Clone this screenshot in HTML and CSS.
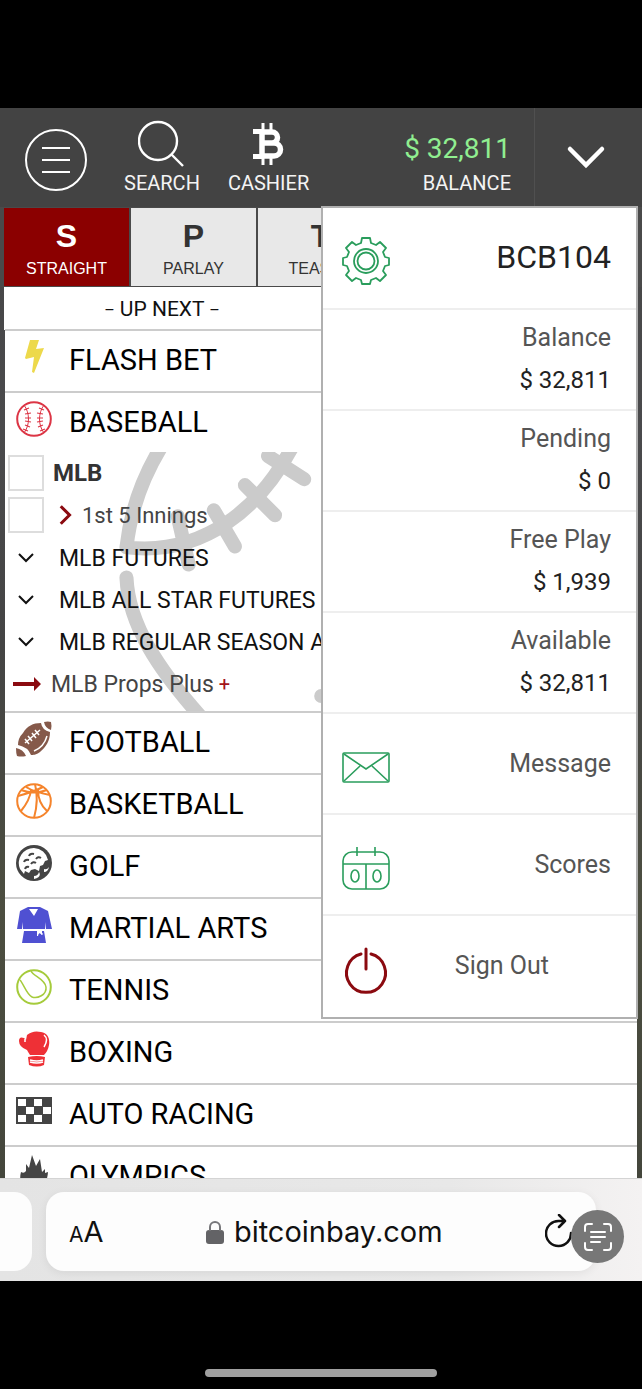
FILE: index.html
```html
<!DOCTYPE html>
<html lang="en">
<head>
<meta charset="utf-8">
<meta name="viewport" content="width=device-width, initial-scale=1">
<title>Sportsbook</title>
<link rel="stylesheet" href="styles.css">
</head>
<body>
<div class="site">
  <header class="topbar">
    <button class="top-btn burger" aria-label="Menu">
      <svg width="64" height="64" viewBox="0 0 64 64" fill="none" stroke="#fff" stroke-width="2"><circle cx="32" cy="32" r="30"/><path d="M18 20h28M18 32h28M18 44h28"/></svg>
    </button>
    <button class="top-btn tool">
      <svg width="48" height="48" viewBox="0 0 48 48" fill="none" stroke="#fff" stroke-width="2.4"><circle cx="20" cy="21" r="19"/><path d="M33 34l12 12"/></svg>
      <span>SEARCH</span>
    </button>
    <button class="top-btn tool">
      <svg width="48" height="48" viewBox="0 0 48 48" fill="none" stroke="#fff"><path stroke-width="3" d="M18 3v8M26 3v8M18 37v8M26 37v8"/><path stroke-width="5.500" d="M17 12h10a5.500 5.500 0 0 1 0 11H17zM17 23h12a6.500 6.500 0 0 1 0 13H17z"/><path stroke-width="5" d="M8 11.500h9M8 36.500h9"/></svg>
      <span>CASHIER</span>
    </button>
    <div class="balance"><strong>$ 32,811</strong><span>BALANCE</span></div>
    <button class="top-btn toggle" aria-label="Account menu" aria-expanded="true">
      <svg width="40" height="26" viewBox="0 0 40 26" fill="none" stroke="#fff" stroke-width="4.500" stroke-linecap="round"><path d="M4 4l16 16L36 4"/></svg>
    </button>
  </header>

  <nav class="tabs">
    <button class="tab active"><b>S</b><span>STRAIGHT</span></button>
    <button class="tab"><b>P</b><span>PARLAY</span></button>
    <button class="tab"><b>T</b><span>TEASER</span></button>
  </nav>
  <h2 class="upnext"><i>–</i> UP NEXT <i>–</i></h2>

  <main class="sports">
    <a class="sport" href="#flash">
      <svg class="icon" viewBox="0 0 36 36"><path fill="#edd94b" d="M14 1h9l-3 9 8-1-10 25-2-1 2-15-8 2-1-1z"/></svg>FLASH BET</a>
    <section>
      <a class="sport" href="#baseball">
        <svg class="icon" viewBox="0 0 36 36" fill="none" stroke="#dc3545"><circle cx="18" cy="18" r="16.800" stroke-width="2"/><path stroke-width="1" d="M8 4c6 8 6 20 0 28M28 4c-6 8-6 20 0 28"/><path stroke-width="1.200" d="M8 9l5-2M9 13l6-1M9 17h6M9 20l6 1M9 24l5 2M7 28l5 2M28 9l-5-2M27 13l-6-1M27 17h-6M27 20l-6 1M27 24l-5 2M29 28l-5 2"/></svg>BASEBALL</a>
      <div class="leagues">
        <svg class="watermark" viewBox="5 453 632 258" preserveAspectRatio="xMinYMin slice" fill="none" stroke="#cbcbcb" stroke-width="14" stroke-linecap="round" stroke-linejoin="round"><path d="M163 444Q132 493 126 548C205 557 260 506 290 450M126 578C128 625 158 670 202 719M267 457l36 23M244 486l30 30M213 511l21 36M177 517l11 48M320 696h3"/></svg>
        <label class="league"><input type="checkbox"><b>MLB</b></label>
        <label class="league"><input type="checkbox"><svg class="caret" viewBox="0 0 16 24" fill="none" stroke="#8b0a10" stroke-width="3.500"><path d="M2 2l10 10L2 22"/></svg><span class="period">1st 5 Innings</span></label>
        <div class="futures">
          <button class="future"><svg viewBox="0 0 16 10" fill="none" stroke="#111" stroke-width="2"><path d="M1 1l7 7 7-7"/></svg>MLB FUTURES</button>
          <button class="future"><svg viewBox="0 0 16 10" fill="none" stroke="#111" stroke-width="2"><path d="M1 1l7 7 7-7"/></svg>MLB ALL STAR FUTURES</button>
          <button class="future"><svg viewBox="0 0 16 10" fill="none" stroke="#111" stroke-width="2"><path d="M1 1l7 7 7-7"/></svg>MLB REGULAR SEASON AWARDS</button>
          <a class="props" href="#props"><svg viewBox="0 0 28 14"><path fill="#8b0a10" d="M0 5h21V0l7 7-7 7V9H0z"/></svg>MLB Props Plus <em>+</em></a>
        </div>
      </div>
    </section>
    <a class="sport" href="#football">
      <svg class="icon" viewBox="0 0 36 36"><path fill="#85594a" d="M7 12C11 5 17 2 25 2q1 7 9 9c0 9-4 15-10 20-4 3-7 3-9 3Q12 26 2 24q0-7 5-12zM28 1q4-1 7 0 1 4 0 8-6-2-7-8zM0 27q7 1 10 8-5 1-9 0-1-3-1-8z"/><path fill="none" stroke="#fff" stroke-width="1.500" d="M9 22L24 9M9 18l4 5M12 15l4 5M16 12l4 5M19 9l4 5M31 15q-3 11-13 15"/></svg>FOOTBALL</a>
    <a class="sport" href="#basketball">
      <svg class="icon" viewBox="0 0 36 36" fill="none" stroke="#f5842c" stroke-width="2"><circle cx="18" cy="18" r="16.800"/><path d="M19 1q4 16-1 34M5 7q13 5 26 0M10 4q8 5 24 8M27 4Q17 9 2 13M15 7Q14 17 5 28M22 7q0 13 9 21"/></svg>BASKETBALL</a>
    <a class="sport" href="#golf">
      <svg class="icon" viewBox="0 0 36 36"><circle cx="18" cy="18" r="18" fill="#444"/><path fill="#fff" d="M18 3a15 15 0 0 1 14 12l-3 1-2 4-3 1-1 5-4-2-4 1-2 3-4-2-1 3-4-5A15 15 0 0 1 18 3zM28 24q3 1 5-2-1 5-5 5zM18 31q4 0 5-4 3 5-5 7z"/><path fill="none" stroke="#444" stroke-width="2" d="M13 11q1-3 5-2M20 14q2-3 5-1M8 17q1-3 5-2M15 19q2-3 5-1M9 24q1-3 4-2"/></svg>GOLF</a>
    <a class="sport" href="#martial-arts">
      <svg class="icon" viewBox="0 0 36 36" fill="#4f50d2"><path d="M12 0h12l8 4 4 18h-6l-1-7v7H7v-7l-1 7H1L4 4z"/><path d="M8 24h14l-1 4 3-2 2 2v-4h2l2 12H6z"/><path fill="#fff" d="M13 2h9l-4 7zM21 22l2 0 4 5-1 1-3-3-1 4-1 0z"/></svg>MARTIAL ARTS</a>
    <a class="sport" href="#tennis">
      <svg class="icon" viewBox="0 0 36 36" fill="none" stroke="#a5cb3b" stroke-width="2"><circle cx="18" cy="18" r="16.800"/><path stroke-width="1.500" d="M15 2c2 5 14 8 15 16S21 30 16 28 7 14 4 11"/></svg>TENNIS</a>
    <a class="sport" href="#boxing">
      <svg class="icon" viewBox="0 0 36 36"><path fill="#ee3036" d="M11 4Q17-1 25 1c7 1 9 7 8 13q-1 6-5 10H14q-2-3-3-5-8-3-8-9Q3 5 8 7l2 2zM12 26q9-2 17 0l-1 8q-7 3-15 0z"/><path fill="none" stroke="#fff" stroke-width="1.500" d="M28 4q5 4 0 12M9 8v3M14 29q7 2 13 0M14 31q7 2 13 0"/></svg>BOXING</a>
    <a class="sport" href="#auto-racing">
      <svg class="icon" viewBox="0 0 36 36"><path fill="#444" d="M0 4h36v27H0z"/><path fill="#fff" d="M2 6h8v7H2zM18 6h8v7h-8zM10 14h8v7h-8zM27 14h8v7h-8zM2 22h8v7H2zM18 22h8v7h-8z"/></svg>AUTO RACING</a>
    <a class="sport" href="#olympics">
      <svg class="icon" viewBox="0 0 36 36"><path fill="#444" d="M5 17q3 2 5-1V9l3 4 3-13 4 11 4-7 2 13 3-3v4l3-1q-1 16-14 17Q1 32 5 17z"/></svg>OLYMPICS</a>
  </main>

  <aside class="account">
    <a class="item user" href="#settings">
      <svg viewBox="0 0 48 48" fill="none" stroke="#2a9d5c" stroke-width="1.800"><circle cx="24" cy="24" r="12"/><circle cx="24" cy="24" r="8.500"/><path stroke-linejoin="round" d="M20 1h8l1 5 5 2 4-3 6 6-3 4 2 5 4 1v7l-4 1-2 5 3 4-6 6-4-3-5 2-1 4h-8l-1-4-5-2-4 3-6-6 3-4-2-5-4-1v-7l4-1 2-5-3-4 6-6 4 3 5-2z"/></svg>
      <span>BCB104</span></a>
    <div class="item money"><span>Balance</span><b>$ 32,811</b></div>
    <div class="item money"><span>Pending</span><b>$ 0</b></div>
    <div class="item money"><span>Free Play</span><b>$ 1,939</b></div>
    <div class="item money"><span>Available</span><b>$ 32,811</b></div>
    <a class="item" href="#message">
      <svg viewBox="0 0 48 48" fill="none" stroke="#2a9d5c" stroke-width="1.600"><rect x="1" y="9" width="46" height="29" rx="1"/><path d="M2 10l22 15 22-15M2 37l16-15M46 37L30 22"/></svg>
      <span>Message</span></a>
    <a class="item" href="#scores">
      <svg viewBox="0 0 48 48" fill="none" stroke="#2a9d5c" stroke-width="1.600"><rect x="1" y="7" width="46" height="37" rx="9"/><path d="M15 2v9M33 2v9M1 19h46M24 19v25"/><ellipse cx="13" cy="31" rx="4" ry="6"/><ellipse cx="35" cy="31" rx="4" ry="6"/></svg>
      <span>Scores</span></a>
    <button class="item signout">
      <svg viewBox="0 0 48 48" fill="none" stroke="#8b0a10" stroke-width="3" stroke-linecap="round"><path d="M24 3v20M19 8a19.500 19.500 0 1 0 10 0"/></svg>
      <span>Sign Out</span></button>
  </aside>
</div>

<div class="browser">
  <div class="prev-page"></div>
  <div class="address">
    <button class="reader" aria-label="Page settings"><small>A</small>A</button>
    <button class="url"><svg width="18" height="24" viewBox="0 0 18 24"><rect y="10" width="18" height="14" rx="3" fill="#636366"/><path d="M4 11V7a5 5 0 0 1 10 0v4" fill="none" stroke="#77777a" stroke-width="2"/></svg>bitcoinbay.com</button>
    <button class="reload" aria-label="Reload"><svg width="28" height="36" viewBox="0 0 28 36" fill="none" stroke="#111" stroke-width="2.500" stroke-linecap="round" stroke-linejoin="round"><path d="M26 19A12.500 12.500 0 1 1 14 7h6M14 1l6 6-6 6"/></svg></button>
  </div>
  <button class="livetext" aria-label="Scan text"><svg width="28" height="28" viewBox="0 0 28 28" fill="none" stroke="#fff" stroke-width="2" stroke-linecap="round"><path d="M1 8V4q0-3 3-3h4M20 1h4q3 0 3 3v4M27 20v4q0 3-3 3h-4M8 27H4q-3 0-3-3v-4M7 9h14M7 14h14M7 19h9"/></svg></button>
</div>
<div class="home"></div>
</body>
</html>
```
FILE: styles.css
```css
* { box-sizing: border-box; }
body {
  margin: 0;
  height: 100vh;
  padding-top: 108px;
  display: grid;
  grid-template-rows: 1fr 103px 108px;
  background: #000;
  color: #111;
  font-family: Roboto, "Liberation Sans", sans-serif;
}
button {
  margin: 0;
  padding: 0;
  border: 0;
  background: none;
  color: inherit;
  font: inherit;
  cursor: pointer;
}
a { color: inherit; text-decoration: none; }
svg { display: block; flex: none; }

.site {
  position: relative;
  min-height: 0;
  overflow: hidden;
  background: linear-gradient(#444 0, #4a4a4c 30%, #444 50%, #4c4e40 75%, #44463c 100%);
}

.topbar {
  display: flex;
  height: 99px;
  padding-left: 24px;
  background: #434343;
  color: #f4f4f4;
}
.burger { display: grid; place-items: center; width: 64px; padding-top: 5px; }
.tool {
  display: flex;
  flex-direction: column;
  align-items: center;
  padding-top: 12px;
  margin-left: 28px;
  font-size: 20px;
  line-height: 30px;
}
.burger + .tool { margin-left: 36px; }
.balance {
  display: flex;
  flex-direction: column;
  align-items: flex-end;
  margin-left: auto;
  padding: 22px 23px 0 0;
  font-size: 20px;
  line-height: 30px;
}
.balance strong {
  color: #90ee90;
  font-size: 28px;
  font-weight: 400;
  line-height: 38px;
}
.toggle {
  display: grid;
  place-items: center;
  width: 108px;
  padding-right: 5px;
  border-left: 1px solid #505050;
}

.tabs {
  display: grid;
  grid-template-columns: repeat(5, 1fr);
  gap: 2px;
  padding: 1px 5px 1px 4px;
  background: #4a4a4a;
}
.tab {
  display: flex;
  flex-direction: column;
  align-items: center;
  height: 78px;
  padding-top: 10px;
  background: #e8e8e8;
  color: #333;
  font-family: "Liberation Sans", Arial, sans-serif;
  font-size: 16px;
  line-height: 30px;
}
.tab b { font-size: 32px; line-height: 36px; }
.tab.active { background: #8b0000; color: #fff; }

.upnext {
  margin: 0 4px;
  padding: 3px 318px 0 0;
  background: #fff;
  font-size: 21px;
  font-weight: 400;
  line-height: 39px;
  text-align: center;
}
.upnext i { font-size: 16px; font-style: normal; }

.sports { margin: 0 5px; background: #fff; }
.sport {
  display: flex;
  align-items: flex-start;
  gap: 17px;
  height: 62px;
  padding: 8px 11px;
  border-top: 2px solid #ccc;
  color: #000;
  font-size: 29px;
  line-height: 42px;
}
.upnext + .sports { margin-top: -1px; }
.icon { width: 36px; height: 36px; }

.leagues { position: relative; padding-bottom: 6px; margin-top: -1px; }
.watermark { position: absolute; width: 100%; height: 100%; }
.league, .future, .props {
  position: relative;
  display: flex;
  align-items: center;
  height: 42px;
  font-size: 22px;
  white-space: nowrap;
}
.league { padding-left: 3px; gap: 9px; color: #333; }
.league b { font-size: 24px; }
.league input {
  appearance: none;
  width: 36px;
  height: 36px;
  margin: 0;
  border: 2px solid #ddd;
  background: #fff;
}
.caret { width: 14px; height: 24px; margin-left: 6px; }
.period { color: #444; }
.futures { padding-top: 1px; }
.future { gap: 25px; padding-left: 13px; font-size: 23px; }
.future svg { width: 16px; height: 10px; }
.props { gap: 10px; padding-left: 8px; color: #444; font-size: 23px; }
.props svg { width: 28px; height: 14px; }
.props em { color: #a3141a; font-style: normal; font-size: 20px; margin-left: -5px; }

.account {
  position: absolute;
  top: 98px;
  left: 50%;
  right: 4px;
  border: 2px solid #b0b0b0;
  background: #fff;
  color: #555;
  font-size: 25px;
  line-height: 30px;
}
.item {
  display: flex;
  justify-content: space-between;
  width: 100%;
  height: 101px;
  padding: 35px 25px 0 19px;
  border-top: 2px solid #eee;
}
.item:first-child { height: 100px; border-top: 0; }
.item svg { width: 48px; height: 48px; margin-top: -5px; }
.item.user { padding-top: 34px; color: #222; font-size: 32px; }
.money {
  flex-direction: column;
  align-items: flex-end;
  justify-content: flex-start;
  gap: 12px;
  padding-top: 13px;
}
.money b { color: #222; font-size: 24px; font-weight: 400; }
.signout { height: 103px; padding-right: 87px; }

.browser {
  position: relative;
  display: flex;
  gap: 14px;
  padding: 13px 46px 10px 0;
  overflow: hidden;
  border-top: 1px solid #d4d4d4;
  background: linear-gradient(90deg, #e4e4e4, #e8e8e8 70%, #f4f2f2);
}
.prev-page { width: 32px; border-radius: 0 18px 18px 0; background: #fdfdfd; }
.address {
  flex: 1;
  display: flex;
  align-items: center;
  justify-content: space-between;
  padding: 0 23px;
  border-radius: 18px;
  background: #fdfdfd;
  box-shadow: 0 2px 10px #0001;
  font-family: Inter, "Liberation Sans", sans-serif;
  font-size: 29px;
}
.reader small { font-size: 21px; }
.url { display: flex; align-items: center; gap: 10px; }
.livetext {
  position: absolute;
  right: 18px;
  top: 31px;
  display: grid;
  place-items: center;
  width: 53px;
  height: 53px;
  border-radius: 50%;
  background: #777;
}

.home { display: flex; justify-content: center; align-items: flex-end; padding-bottom: 12px; }
.home::after {
  content: "";
  width: 36%;
  height: 8px;
  border-radius: 4px;
  background: #a0a0a0;
}
```
